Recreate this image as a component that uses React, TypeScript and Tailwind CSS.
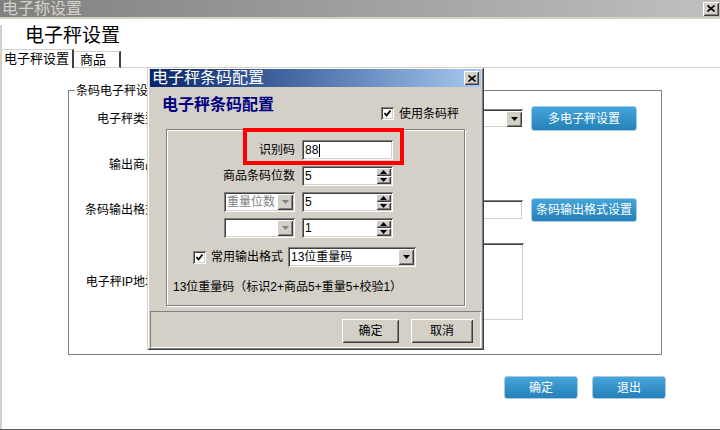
import React from 'react';

const sunken =
  'shadow-[inset_1px_1px_#808080,inset_-1px_-1px_#ffffff,inset_2px_2px_#404040,inset_-2px_-2px_#d4d0c8]';
const raised =
  'shadow-[inset_1px_1px_#ffffff,inset_-1px_-1px_#404040,inset_2px_2px_#d4d0c8,inset_-2px_-2px_#808080]';

function Arrow({ up = false, color = '#000' }: { up?: boolean; color?: string }) {
  return (
    <svg width="7" height="4" viewBox="0 0 7 4">
      <path d={up ? 'M3.5 0 L7 4 L0 4 Z' : 'M0 0 L7 0 L3.5 4 Z'} fill={color} />
    </svg>
  );
}

function DropBtn({ disabled = false }: { disabled?: boolean }) {
  return (
    <span className={`flex h-[16px] w-[16px] shrink-0 items-center justify-center bg-[#d4d0c8] ${raised}`}>
      <Arrow color={disabled ? '#808080' : '#000'} />
    </span>
  );
}

function Spin() {
  return (
    <span className="flex h-[16px] w-[15px] shrink-0 flex-col">
      <span className={`flex h-[8px] items-center justify-center bg-[#d4d0c8] ${raised}`}>
        <Arrow up />
      </span>
      <span className={`flex h-[8px] items-center justify-center bg-[#d4d0c8] ${raised}`}>
        <Arrow />
      </span>
    </span>
  );
}

function Check() {
  return (
    <span className={`flex h-[13px] w-[13px] shrink-0 items-center justify-center bg-white ${sunken}`}>
      <svg width="9" height="9" viewBox="0 0 9 9">
        <path d="M1.5 4 L3.5 6.5 L7.5 1.5" stroke="#000" strokeWidth="1.8" fill="none" />
      </svg>
    </span>
  );
}

function CloseX({ w, h }: { w: number; h: number }) {
  return (
    <span className={`flex items-center justify-center bg-[#d4d0c8] ${raised}`} style={{ width: w, height: h }}>
      <svg width="8" height="7" viewBox="0 0 8 7">
        <path d="M0.5 0.5 L7.5 6.5 M7.5 0.5 L0.5 6.5" stroke="#000" strokeWidth="1.6" />
      </svg>
    </span>
  );
}

function SpinInput({ value }: { value: string }) {
  return (
    <div className={`flex h-[20px] w-[91px] items-center justify-between bg-white pl-[3px] pr-[2px] ${sunken}`}>
      <span className="leading-[14px]">{value}</span>
      <Spin />
    </div>
  );
}

function BlueBtn({ label, w, h }: { label: string; w: string; h: string }) {
  return (
    <button
      className={`${w} ${h} flex shrink-0 items-center justify-center rounded-[3px] border border-[#a9cce4] bg-linear-to-b from-[#45a5da] to-[#2581b9] text-[12px] text-white`}
    >
      {label}
    </button>
  );
}

function WinBtn({ label, w }: { label: string; w: string }) {
  return (
    <button className={`${w} flex h-[24px] items-center justify-center bg-[#d4d0c8] text-[12px] ${raised}`}>
      {label}
    </button>
  );
}

export default function App() {
  return (
    <div className="relative h-[430px] w-[720px] overflow-hidden bg-white font-['Liberation_Sans','Noto_Sans_CJK_SC',sans-serif] text-[12px] text-black">
      {/* outer window title */}
      <div className="flex h-[17px] items-center justify-between bg-linear-to-r from-[#808080] to-[#c0c0c0] pl-[2px] pr-[1px]">
        <span className="text-[16px] leading-[17px] text-[#d4d0c8]">电子称设置</span>
        <CloseX w={16} h={14} />
      </div>
      <div className="h-[2px] bg-[#d4d0c8]" />

      <div className="h-[404px] border-l-2 border-[#d4d0c8]">
        <div className="ml-[23px] mt-[6px] text-[19px] leading-[22px]">电子秤设置</div>

        {/* tabs */}
        <div className="mt-[2px] flex h-[19px] items-end">
          <div className="flex h-[19px] w-[72px] items-start border-r-2 border-t border-r-[#404040] border-t-[#d4d0c8] bg-white pl-[2px] pt-[1px] text-[13px] leading-[16px]">
            电子秤设置
          </div>
          <div className="flex h-[17px] w-[47px] items-start border-b border-r-2 border-t border-b-[#d4d0c8] border-r-[#404040] border-t-[#d4d0c8] pl-[6px] text-[13px] leading-[15px]">
            商品
          </div>
          <div className="h-[1px] flex-1 bg-[#d4d0c8]" />
        </div>

        {/* group box */}
        <div className="relative ml-[66px] mt-[22px] flex h-[265px] w-[594px] flex-col border border-[#808080]">
          <span className="absolute -top-[7px] left-[6px] bg-white px-[1px] leading-[14px]">条码电子秤设置</span>

          <div className="mt-[15px] flex h-[25px] items-center">
            <span className="w-[100px] text-right">电子秤类型：</span>
            <div className={`ml-[14px] flex h-[19px] w-[340px] items-center justify-end bg-white pr-[1px] ${sunken}`}>
              <DropBtn />
            </div>
            <div className="ml-[8px]">
              <BlueBtn label="多电子秤设置" w="w-[106px]" h="h-[25px]" />
            </div>
          </div>

          <div className="mt-[24px] flex h-[20px] items-center">
            <span className="w-[100px] text-right">输出商品：</span>
            <div className={`ml-[14px] h-[20px] w-[300px] bg-white ${sunken}`} />
          </div>

          <div className="mt-[23px] flex h-[24px] items-center">
            <span className="w-[100px] text-right">条码输出格式：</span>
            <div className={`ml-[14px] h-[20px] w-[340px] bg-white ${sunken}`} />
            <div className="ml-[8px]">
              <BlueBtn label="条码输出格式设置" w="w-[106px]" h="h-[24px]" />
            </div>
          </div>

          <div className="mt-[21px] flex h-[78px] items-center">
            <span className="w-[100px] text-right">电子秤IP地址：</span>
            <div className={`ml-[14px] h-[78px] w-[341px] bg-white ${sunken}`} />
          </div>
        </div>

        <div className="ml-[502px] mt-[21px] flex gap-[14px]">
          <BlueBtn label="确定" w="w-[74px]" h="h-[23px]" />
          <BlueBtn label="退出" w="w-[74px]" h="h-[23px]" />
        </div>
      </div>

      <div className="h-[2px] bg-[#5a5a5a]" />
      <div className="h-[2px] bg-[#d4d0c8]" />
      <div className="h-[3px] bg-[#808080]" />

      {/* barcode config dialog */}
      <div
        className={`absolute left-[147px] top-[67px] flex h-[283px] w-[337px] flex-col bg-[#d4d0c8] px-[3px] pt-[2px] shadow-[inset_1px_1px_#d4d0c8,inset_-1px_-1px_#404040,inset_2px_2px_#ffffff,inset_-2px_-2px_#808080]`}
      >
        <div className="flex h-[18px] items-center justify-between bg-linear-to-r from-[#0a246a] to-[#a6caf0] pl-[2px] pr-[2px]">
          <span className="text-[16px] leading-[18px] text-white">电子秤条码配置</span>
          <CloseX w={15} h={14} />
        </div>

        <div className="flex justify-between">
          <span className="ml-[12px] mt-[9px] text-[16px] font-bold leading-[18px] text-[#000080]">电子秤条码配置</span>
          <div className="mr-[22px] mt-[20px] flex h-[13px] items-center gap-[5px]">
            <Check />
            <span>使用条码秤</span>
          </div>
        </div>

        <div className="relative ml-[16px] mt-[9px] flex h-[177px] w-[299px] flex-col border border-[#808080] shadow-[inset_1px_1px_#ffffff,1px_1px_#ffffff]">
          <div className="pointer-events-none absolute -top-[2px] left-[76px] h-[37px] w-[161px] border-4 border-[#ff0000]" />

          <div className="mt-[10px] flex h-[20px] items-center">
            <span className="flex w-[128px] justify-end">识别码</span>
            <div className={`ml-[7px] flex h-[20px] w-[91px] items-center bg-white pl-[3px] ${sunken}`}>
              <span className="leading-[14px]">88</span>
              <span className="ml-[1px] h-[13px] w-[1px] bg-black" />
            </div>
          </div>

          <div className="mt-[6px] flex h-[20px] items-center">
            <span className="flex w-[128px] justify-end">商品条码位数</span>
            <div className="ml-[7px]">
              <SpinInput value="5" />
            </div>
          </div>

          <div className="mt-[6px] flex h-[20px] items-center">
            <div className="flex w-[128px] justify-end">
              <div className={`flex h-[20px] w-[71px] items-center justify-between bg-white pl-[3px] pr-[2px] ${sunken}`}>
                <span className="text-[#808080]">重量位数</span>
                <DropBtn disabled />
              </div>
            </div>
            <div className="ml-[7px]">
              <SpinInput value="5" />
            </div>
          </div>

          <div className="mt-[6px] flex h-[20px] items-center">
            <div className="flex w-[128px] justify-end">
              <div className={`flex h-[20px] w-[71px] items-center justify-end bg-white pr-[2px] ${sunken}`}>
                <DropBtn disabled />
              </div>
            </div>
            <div className="ml-[7px]">
              <SpinInput value="1" />
            </div>
          </div>

          <div className="mt-[9px] flex h-[20px] items-center pl-[26px]">
            <Check />
            <span className="ml-[5px]">常用输出格式</span>
            <div className={`ml-[5px] flex h-[20px] w-[128px] items-center justify-between bg-white pl-[3px] pr-[2px] ${sunken}`}>
              <span>13位重量码</span>
              <DropBtn />
            </div>
          </div>

          <div className="mt-[13px] pl-[6px] leading-[15px]">13位重量码（标识2+商品5+重量5+校验1）</div>
        </div>

        <div className="mt-[5px] flex h-[37px] justify-end gap-[12px] pr-[8px] pt-[8px] shadow-[inset_1px_1px_#808080,inset_-1px_-1px_#ffffff]">
          <WinBtn label="确定" w="w-[57px]" />
          <WinBtn label="取消" w="w-[62px]" />
        </div>
      </div>
    </div>
  );
}
